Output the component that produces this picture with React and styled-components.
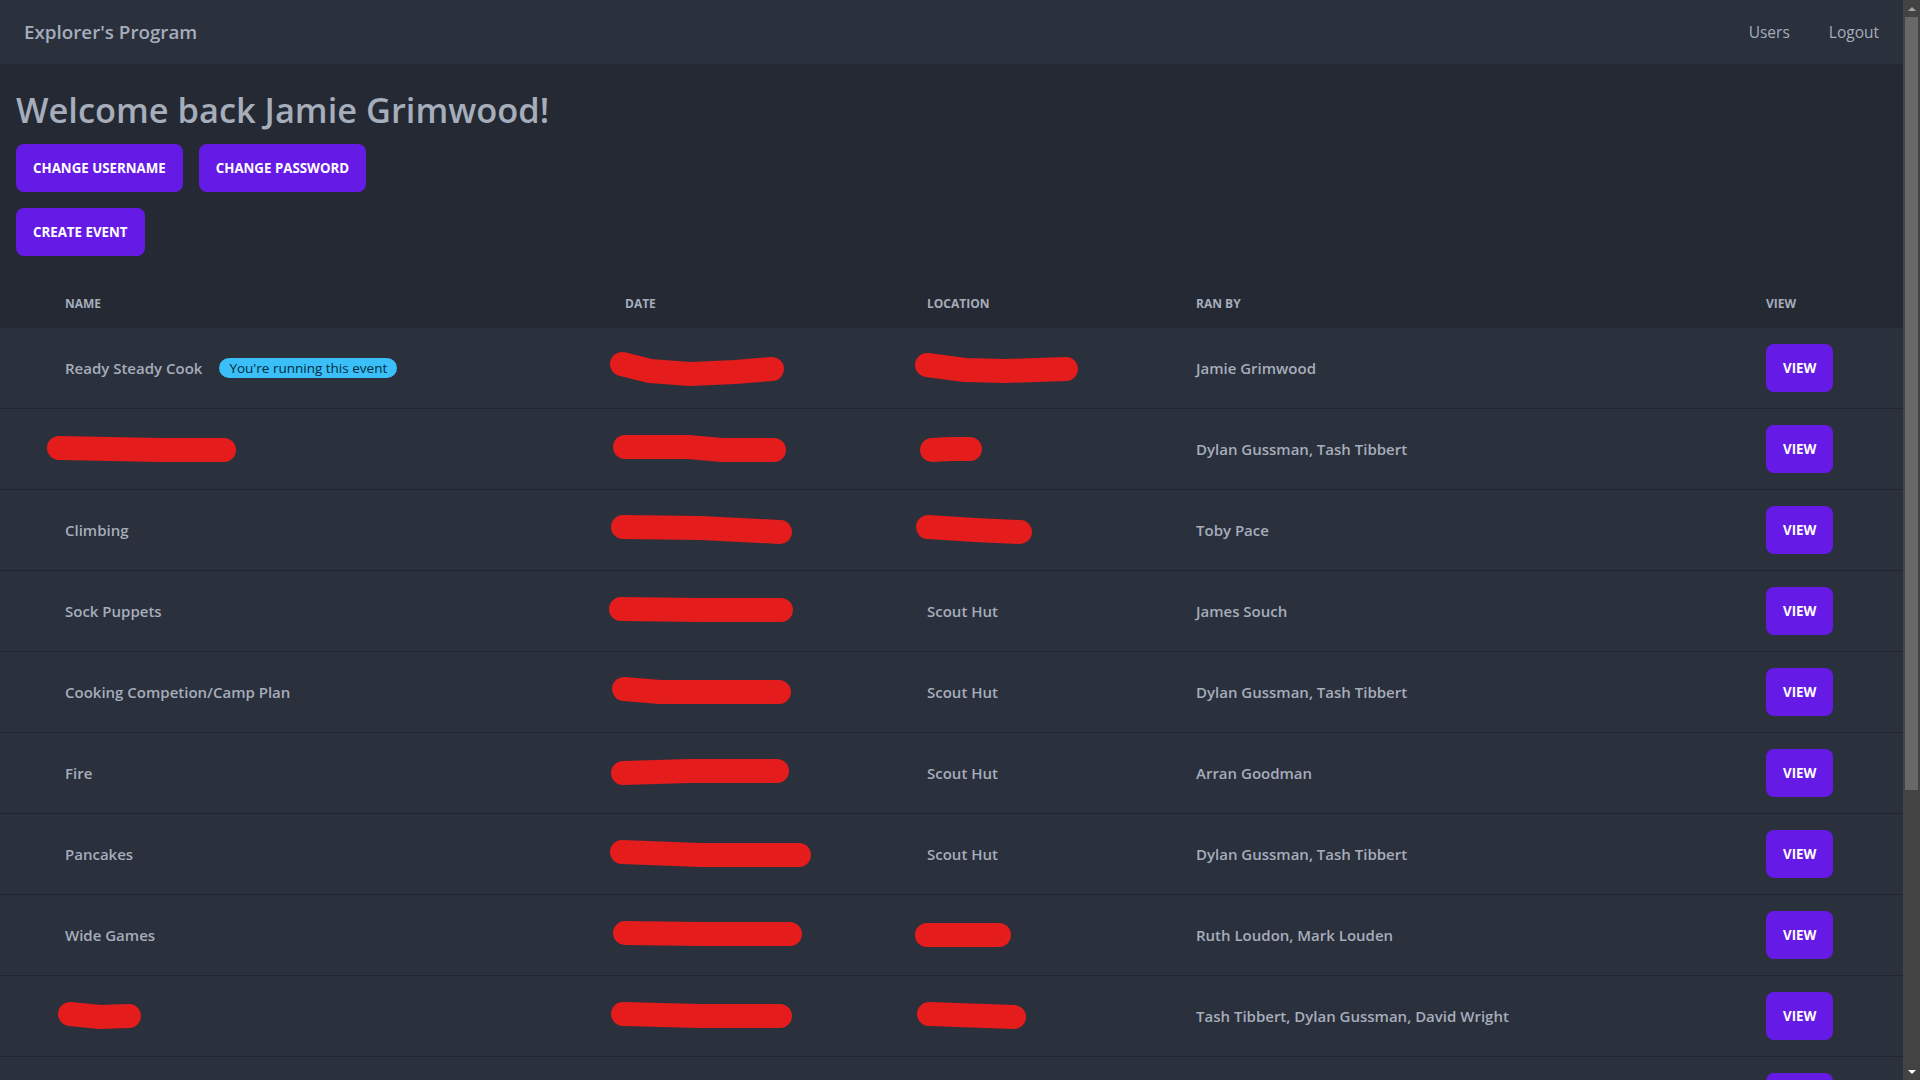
import React from 'react';
import styled, { createGlobalStyle } from 'styled-components';

const GlobalStyle = createGlobalStyle`
  html, body {
    margin: 0;
    padding: 0;
    height: 100%;
    overflow: hidden;
    background: #242933;
  }
  body {
    font-family: "Open Sans", "Noto Sans", sans-serif;
    color: #a6adbb;
  }
  #root { height: 100%; }
`;

const Shell = styled.div`
  display: flex;
  height: 100vh;
  overflow: hidden;
`;

const Page = styled.div`
  flex: 1;
  min-width: 0;
  overflow: hidden;
  background: #242933;
`;

const ScrollBar = styled.div`
  width: 17px;
  flex-shrink: 0;
  background: #434343;
  display: flex;
  flex-direction: column;
`;

const ScrollArrow = styled.div`
  height: 17px;
  flex-shrink: 0;
  display: flex;
  align-items: center;
  justify-content: center;

  &::after {
    content: '';
    width: 0;
    height: 0;
    border-left: 4px solid transparent;
    border-right: 4px solid transparent;
    ${p =>
      p.$dir === 'up'
        ? 'border-bottom: 4px solid #a3a3a3;'
        : 'border-top: 4px solid #ffffff;'}
  }
`;

const ScrollTrack = styled.div`
  flex: 1;
  padding: 0 2px;
`;

const ScrollThumb = styled.div`
  height: 773px;
  background: #686868;
`;

const Navbar = styled.nav`
  height: 64px;
  box-sizing: border-box;
  padding: 0 8px;
  background: #2a303c;
  display: flex;
  align-items: center;
  justify-content: space-between;
`;

const Brand = styled.a`
  padding: 0 16px;
  font-size: 18.8px;
  font-weight: 600;
  color: #a6adbb;
  text-decoration: none;
`;

const Menu = styled.ul`
  display: flex;
  gap: 7px;
  list-style: none;
  margin: 0;
  padding: 0;
`;

const MenuLink = styled.a`
  display: block;
  padding: 12px 16px;
  font-size: 15.5px;
  line-height: 20px;
  color: #a6adbb;
  text-decoration: none;
`;

const Intro = styled.section`
  padding: 26px 16px 0;
`;

const Title = styled.h1`
  margin: 0;
  font-size: 34.4px;
  line-height: 40px;
  font-weight: 600;
  color: #a6adbb;
`;

const ButtonRow = styled.div`
  display: flex;
  gap: 16px;
  margin-top: ${p => p.$mt}px;
`;

const Button = styled.button`
  height: 48px;
  padding: 0 17px;
  border: none;
  border-radius: 8px;
  background: #661ae6;
  color: #ffffff;
  font-family: inherit;
  font-size: 13.3px;
  font-weight: 700;
  text-transform: uppercase;
  cursor: pointer;
`;

const Table = styled.table`
  width: 100%;
  margin-top: 24px;
  border-collapse: collapse;
  table-layout: fixed;
`;

const Col = styled.col`
  width: ${p => (p.$w ? `${p.$w}px` : 'auto')};
`;

const Th = styled.th`
  padding: 16px;
  line-height: 16px;
  text-align: left;
  font-size: 12px;
  font-weight: 700;
  text-transform: uppercase;
  color: #a6adbb;
`;

const Tr = styled.tr`
  background: #2a303c;
  border-bottom: 1px solid #21252d;
`;

const Td = styled.td`
  padding: 16px;
  font-size: 15px;
  font-weight: 600;
  color: #a6adbb;
  vertical-align: middle;
  white-space: nowrap;
`;

const NameWrap = styled.div`
  display: flex;
  align-items: center;
  gap: 17px;
`;

const Badge = styled.span`
  display: inline-flex;
  align-items: center;
  height: 20px;
  padding: 0 10px;
  border-radius: 999px;
  background: #3abff8;
  color: #002b3d;
  font-size: 13.5px;
  font-weight: 400;
`;

const ScribbleSvg = styled.svg`
  display: block;
  margin-left: ${p => p.$offset}px;
  overflow: visible;
`;

// pts: [absoluteX, dy] pairs along the stroke centre; start = x where the cell content begins
function Scribble({ pts, start }) {
  const left = pts[0][0] - 12;
  const right = pts[pts.length - 1][0] + 12;
  const w = right - left;
  const points = pts.map(([x, dy]) => `${x - left},${20 + dy}`).join(' ');
  return (
    <ScribbleSvg $offset={left - start} width={w} height={40} viewBox={`0 0 ${w} 40`}>
      <polyline
        points={points}
        fill="none"
        stroke="#e41c1c"
        strokeWidth="24"
        strokeLinecap="round"
        strokeLinejoin="round"
      />
    </ScribbleSvg>
  );
}

const START = { name: 65, date: 625, location: 927, ranBy: 1196 };

const events = [
  {
    name: 'Ready Steady Cook',
    mine: true,
    date: [[622, -4], [650, 3], [690, 6], [735, 4], [772, 1]],
    location: [[927, -3], [965, 2], [1005, 3], [1066, 1]],
    ranBy: 'Jamie Grimwood',
  },
  {
    name: [[59, -1], [110, 0], [160, 1], [224, 1]],
    date: [[625, -2], [688, -2], [722, 1], [774, 1]],
    location: [[932, 1], [950, 0], [970, 0]],
    ranBy: 'Dylan Gussman, Tash Tibbert',
  },
  {
    name: 'Climbing',
    date: [[623, -3], [700, -2], [740, 0], [780, 2]],
    location: [[928, -3], [975, 0], [1020, 2]],
    ranBy: 'Toby Pace',
  },
  {
    name: 'Sock Puppets',
    date: [[621, -2], [700, -1], [781, -1]],
    location: 'Scout Hut',
    ranBy: 'James Souch',
  },
  {
    name: 'Cooking Competion/Camp Plan',
    date: [[624, -3], [660, 0], [779, 0]],
    location: 'Scout Hut',
    ranBy: 'Dylan Gussman, Tash Tibbert',
  },
  {
    name: 'Fire',
    date: [[623, 0], [690, -2], [777, -2]],
    location: 'Scout Hut',
    ranBy: 'Arran Goodman',
  },
  {
    name: 'Pancakes',
    date: [[622, -2], [700, 1], [799, 1]],
    location: 'Scout Hut',
    ranBy: 'Dylan Gussman, Tash Tibbert',
  },
  {
    name: 'Wide Games',
    date: [[625, -2], [700, -1], [790, -1]],
    location: [[927, 0], [999, 0]],
    ranBy: 'Ruth Loudon, Mark Louden',
  },
  {
    name: [[70, -2], [100, 1], [129, 0]],
    date: [[623, -2], [700, 0], [780, 0]],
    location: [[929, -2], [1014, 1]],
    ranBy: 'Tash Tibbert, Dylan Gussman, David Wright',
  },
  { name: '', date: '', location: '', ranBy: '' },
];

function Cell({ value, start }) {
  if (Array.isArray(value)) return <Scribble pts={value} start={start} />;
  return value;
}

export default function App() {
  return (
    <>
      <GlobalStyle />
      <Shell>
        <Page>
          <Navbar>
            <Brand href="#">Explorer's Program</Brand>
            <Menu>
              <li><MenuLink href="#">Users</MenuLink></li>
              <li><MenuLink href="#">Logout</MenuLink></li>
            </Menu>
          </Navbar>

          <Intro>
            <Title>Welcome back Jamie Grimwood!</Title>
            <ButtonRow $mt={14}>
              <Button>Change Username</Button>
              <Button>Change Password</Button>
            </ButtonRow>
            <ButtonRow $mt={16}>
              <Button>Create Event</Button>
            </ButtonRow>
          </Intro>

          <Table>
            <colgroup>
              <Col $w={49} />
              <Col $w={560} />
              <Col $w={302} />
              <Col $w={269} />
              <Col $w={570} />
              <Col />
            </colgroup>
            <thead>
              <tr>
                <Th />
                <Th>Name</Th>
                <Th>Date</Th>
                <Th>Location</Th>
                <Th>Ran By</Th>
                <Th>View</Th>
              </tr>
            </thead>
            <tbody>
              {events.map((ev, i) => (
                <Tr key={i}>
                  <Td />
                  <Td>
                    {ev.mine ? (
                      <NameWrap>
                        {ev.name}
                        <Badge>You're running this event</Badge>
                      </NameWrap>
                    ) : (
                      <Cell value={ev.name} start={START.name} />
                    )}
                  </Td>
                  <Td><Cell value={ev.date} start={START.date} /></Td>
                  <Td><Cell value={ev.location} start={START.location} /></Td>
                  <Td><Cell value={ev.ranBy} start={START.ranBy} /></Td>
                  <Td>
                    <Button>View</Button>
                  </Td>
                </Tr>
              ))}
            </tbody>
          </Table>
        </Page>

        <ScrollBar aria-hidden="true">
          <ScrollArrow $dir="up" />
          <ScrollTrack>
            <ScrollThumb />
          </ScrollTrack>
          <ScrollArrow $dir="down" />
        </ScrollBar>
      </Shell>
    </>
  );
}
